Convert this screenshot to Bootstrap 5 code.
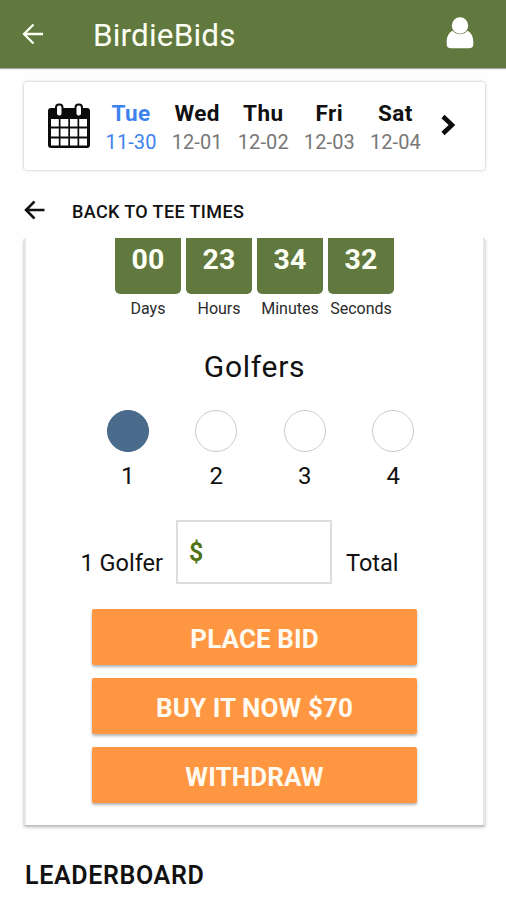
<!DOCTYPE html>
<html lang="en">
<head>
<meta charset="utf-8">
<meta name="viewport" content="width=device-width, initial-scale=1">
<title>BirdieBids</title>
<link href="https://cdn.jsdelivr.net/npm/bootstrap@5.3.0/dist/css/bootstrap.min.css" rel="stylesheet">
<style>
  body { font-family: Roboto, "Liberation Sans", sans-serif; color: #111; background: #fefefe; height: 900px; overflow: hidden; line-height: 1; }
  svg { display: block; flex: none; }
  .app-bar { height: 68px; background: #61793e; box-shadow: 0 1px 1px rgba(0,0,0,.35); padding: 0 32px 0 22px; }
  .app-title { font-size: 31.5px; letter-spacing: .15px; color: #fdfff5; margin-left: 49px; padding-top: 3px; }
  .date-strip { margin: 14px 21px 0 24px; height: 88px; border-radius: 3px; box-shadow: 0 0 3px rgba(0,0,0,.3); padding-left: 23px; }
  .cal-icon { margin-top: -1px; }
  .days { margin-left: 7px; padding-top: 3px; }
  .day { width: 66.1px; }
  .day-name { font-size: 22.5px; letter-spacing: .4px; font-weight: 700; height: 27px; line-height: 26px; }
  .day-date { font-size: 20px; letter-spacing: .1px; height: 29px; line-height: 31px; color: #777; }
  .day.active, .day.active .day-date { color: #3e82ee; }
  .next-day { margin: -3px 0 0 12px; }
  .back-row { height: 68px; padding: 12px 24px 0; }
  .back-label { font-size: 18px; font-weight: 500; letter-spacing: .38px; margin-left: 27px; padding-top: 3px; }
  .bid-clip { height: 602px; overflow: hidden; padding: 0 21px 0 24px; }
  .bid-card { height: 587px; border: solid #e6e6e6; border-width: 0 2px; box-shadow: 0 2px 3px rgba(0,0,0,.3); }
  .tile { width: 66px; height: 56px; padding-bottom: 12px; background: #61793e; color: #fdfff5; border-radius: 0 0 5px 5px; font-size: 28.5px; letter-spacing: .2px; font-weight: 700; }
  .tile-label { font-size: 16px; color: #2b2b2b; height: 28px; width: 71px; padding-top: 1px; }
  .golfers-title { font-size: 30px; height: 88px; letter-spacing: .7px; padding-top: 2px; }
  .golfers { padding-left: 12px; }
  .golfer { width: 88.5px; }
  .dot { width: 42px; height: 42px; border: 1px solid #ccc; background: #fff; }
  .dot.chosen { background: #4a6b8c; border-color: #42658a; }
  .golfer-no { font-size: 24px; height: 46px; padding-top: 2px; }
  .bid-row { margin-top: 22px; height: 63px; }
  .bid-label { font-size: 23.5px; padding-top: 24px; }
  .bid-who { padding-right: 13px; }
  .bid-total { padding-left: 14px; }
  .amount { width: 156px; height: 64px; border: 2px solid #ddd; color: #4f7214; font-size: 25px; font-weight: 600; padding: 1px 0 0 11px; }
  .actions { margin: 26px 66px 0 66px; gap: 13px; }
  .btn-bid { height: 56px; background: #ff9642; color: #fffaf0; font-size: 26px; letter-spacing: .1px; font-weight: 700; border: 0; border-radius: 2px; box-shadow: 0 2px 3px rgba(0,0,0,.3); line-height: 1; padding: 4px 0 0; }
  .board-title { font-size: 25px; font-weight: 600; letter-spacing: .65px; margin: 21px 0 0 25px; }
</style>
</head>
<body>
<header class="app-bar d-flex align-items-center">
  <svg width="22" height="22" viewBox="0 0 22 22" fill="none" stroke="#fdfff5" stroke-width="2.3"><path d="M21 11H2M11.500 1.500L2 11l9.500 9.500"/></svg>
  <span class="app-title">BirdieBids</span>
  <svg class="ms-auto" width="28" height="34" viewBox="0 0 28 34" fill="#fff"><circle cx="14" cy="8.500" r="8.200"/><path d="M6.600 13.800C2.800 15.800.7 19.500.7 24.500V27c0 3 1.400 4.300 4.300 4.300h18c2.900 0 4.300-1.300 4.300-4.300v-2.500c0-5-2.100-8.700-5.900-10.700a9.800 9.800 0 0 1-14.800 0z"/></svg>
</header>

<nav class="date-strip d-flex align-items-center bg-white">
  <svg class="cal-icon" width="44" height="46" viewBox="0 0 44 46"><path d="M4 5h36a3 3 0 0 1 3 3v34a3 3 0 0 1-3 3H4a3 3 0 0 1-3-3V8a3 3 0 0 1 3-3z" fill="#0b0b0b"/><path d="M4 16h7.800v7.500H4zM13.500 16h7.800v7.500h-7.800zM23 16h7.500v7.500H23zM32.200 16H40v7.500h-7.800zM4 25.500h7.800v8H4zM13.500 25.500h7.800v8h-7.800zM23 25.500h7.500v8H23zM32.200 25.500H40v8h-7.800zM4 35.500h7.800v7H4zM13.500 35.500h7.800v7h-7.800zM23 35.500h7.500v7H23zM32.200 35.500H40v7h-7.800z" fill="#fff"/><rect x="9" y="1.500" width="6.500" height="12" rx="3" fill="#fff" stroke="#0b0b0b" stroke-width="2"/><rect x="28.500" y="1.500" width="6.500" height="12" rx="3" fill="#fff" stroke="#0b0b0b" stroke-width="2"/></svg>
  <div class="d-flex text-center days">
    <div class="day active"><div class="day-name">Tue</div><div class="day-date">11-30</div></div>
    <div class="day"><div class="day-name">Wed</div><div class="day-date">12-01</div></div>
    <div class="day"><div class="day-name">Thu</div><div class="day-date">12-02</div></div>
    <div class="day"><div class="day-name">Fri</div><div class="day-date">12-03</div></div>
    <div class="day"><div class="day-name">Sat</div><div class="day-date">12-04</div></div>
  </div>
  <svg class="next-day" width="16" height="22" viewBox="0 0 16 22" fill="none" stroke="#0b0b0b" stroke-width="4.500"><path d="M3 2.500L12 11l-9 8.500"/></svg>
</nav>

<div class="back-row d-flex align-items-center">
  <svg width="21" height="20" viewBox="0 0 21 20" fill="none" stroke="#111" stroke-width="2.500"><path d="M20.500 10H2M10.500 1.500L2 10l8.500 8.500"/></svg>
  <span class="back-label">BACK TO TEE TIMES</span>
</div>

<main class="bid-clip">
  <section class="bid-card bg-white">
    <div class="d-flex justify-content-center text-center">
      <div><div class="tile mx-auto d-flex align-items-center justify-content-center">00</div><div class="tile-label d-flex align-items-center justify-content-center">Days</div></div>
      <div><div class="tile mx-auto d-flex align-items-center justify-content-center">23</div><div class="tile-label d-flex align-items-center justify-content-center">Hours</div></div>
      <div><div class="tile mx-auto d-flex align-items-center justify-content-center">34</div><div class="tile-label d-flex align-items-center justify-content-center">Minutes</div></div>
      <div><div class="tile mx-auto d-flex align-items-center justify-content-center">32</div><div class="tile-label d-flex align-items-center justify-content-center">Seconds</div></div>
    </div>
    <h1 class="golfers-title d-flex align-items-center justify-content-center fw-normal mb-0">Golfers</h1>
    <div class="d-flex justify-content-center golfers">
      <div class="golfer"><div class="dot chosen rounded-circle mx-auto"></div><div class="golfer-no d-flex align-items-center justify-content-center">1</div></div>
      <div class="golfer"><div class="dot rounded-circle mx-auto"></div><div class="golfer-no d-flex align-items-center justify-content-center">2</div></div>
      <div class="golfer"><div class="dot rounded-circle mx-auto"></div><div class="golfer-no d-flex align-items-center justify-content-center">3</div></div>
      <div class="golfer"><div class="dot rounded-circle mx-auto"></div><div class="golfer-no d-flex align-items-center justify-content-center">4</div></div>
    </div>
    <div class="bid-row d-flex align-items-center">
      <span class="bid-label bid-who col text-end">1 Golfer</span>
      <div class="amount d-flex align-items-center">$</div>
      <span class="bid-label bid-total col">Total</span>
    </div>
    <div class="actions d-grid">
      <button class="btn btn-bid" type="button">PLACE BID</button>
      <button class="btn btn-bid" type="button">BUY IT NOW $70</button>
      <button class="btn btn-bid" type="button">WITHDRAW</button>
    </div>
  </section>
</main>
<h2 class="board-title">LEADERBOARD</h2>
<script src="https://cdn.jsdelivr.net/npm/bootstrap@5.3.0/dist/js/bootstrap.bundle.min.js"></script>
</body>
</html>
